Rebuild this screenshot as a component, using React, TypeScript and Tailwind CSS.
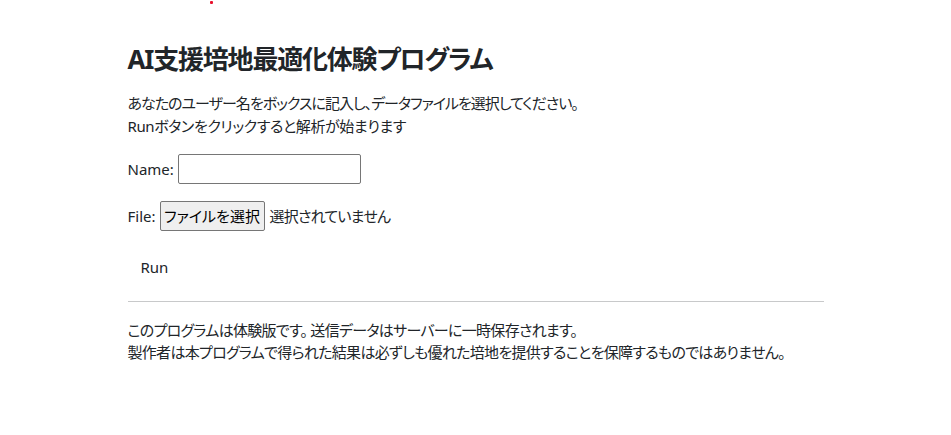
import React, { useState } from 'react';

const App: React.FC = () => {
  const [name, setName] = useState('');

  return (
    <div className="relative min-h-[435px] bg-white text-[#212529] text-[15px] leading-[1.5] [font-family:'Noto_Sans','Noto_Sans_CJK_JP',sans-serif] [font-feature-settings:'palt']">
      {/* stray marker at the top */}
      <span className="absolute left-[210px] top-[1px] h-[3px] w-[3px] rounded-[1px] bg-[#e8112d]" />

      <div className="mx-auto w-[720px] px-3 pt-[44px]">
        <h1 className="mb-[17px] text-[26px] font-bold leading-[31px] tracking-[-1.2px]">AI支援培地最適化体験プログラム</h1>

        <p className="mb-[17px]">
          <span className="tracking-[-1px]">あなたのユーザー名をボックスに記入し、データファイルを選択してください。</span>
          <br />
          <span className="tracking-[-0.4px]">Runボタンをクリックすると解析が始まります</span>
        </p>

        <div className="mb-[17px] flex h-[30px] items-center gap-[4px]">
          <label htmlFor="name">Name:</label>
          <input
            id="name"
            value={name}
            onChange={(e) => setName(e.target.value)}
            className="h-[30px] w-[183px] rounded-[2px] border border-[#767676] px-1 outline-none"
          />
        </div>

        <div className="mb-[17px] flex h-[30px] items-center">
          <span className="mr-[4px]">File:</span>
          <button className="h-[30px] w-[105px] rounded-[2px] border border-[#767676] bg-[#efefef] text-[15px] text-black">
            ファイルを選択
          </button>
          <span className="ml-[5px] tracking-[-0.8px]">選択されていません</span>
        </div>

        <button className="h-[38px] rounded-md border border-transparent px-3 text-[15px]">Run</button>

        <hr className="my-[15px] border-t border-[#c8c9ca]" />

        <p className="mt-[17px] leading-[22px] tracking-[-0.7px]">
          このプログラムは体験版です。 送信データはサーバーに一時保存されます。
          <br />
          製作者は本プログラムで得られた結果は必ずしも優れた培地を提供することを保障するものではありません。
        </p>
      </div>
    </div>
  );
};

export default App;
